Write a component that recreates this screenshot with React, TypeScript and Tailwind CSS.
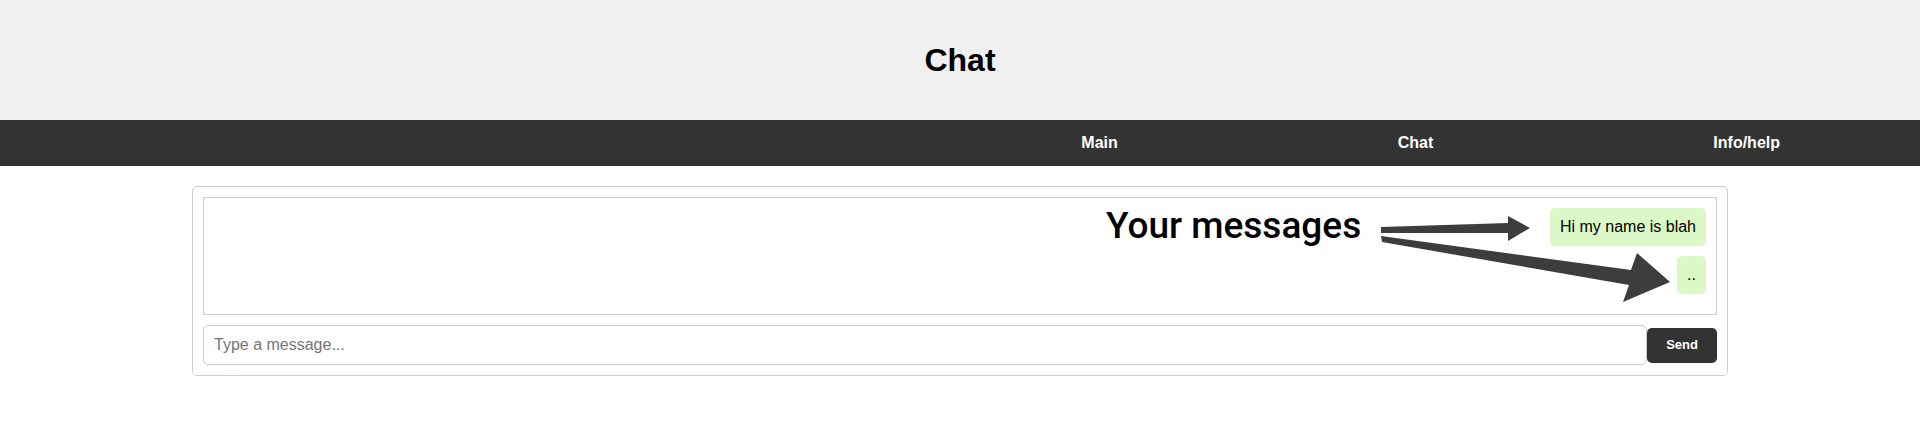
import { useState } from 'react';

const messages = ['Hi my name is blah', '..'];

export default function App() {
  const [text, setText] = useState('');

  return (
    <div className="relative min-h-[426px] bg-white font-['Liberation_Sans',Arial,sans-serif] text-black">
      {/* header */}
      <header className="h-[120px] bg-[#f0f0f0] flex items-center justify-center">
        <h1 className="text-[32px] font-bold leading-normal">Chat</h1>
      </header>

      {/* nav */}
      <nav className="h-[46px] bg-[#333333] flex items-center justify-end">
        {['Main', 'Chat', 'Info/help'].map((label) => (
          <a key={label} href="#" className="px-[140px] text-[16px] font-bold text-white leading-normal">
            {label}
          </a>
        ))}
      </nav>

      {/* chat card */}
      <main className="pt-[20px]">
        <div className="w-[80%] mx-auto border border-[#cccccc] rounded-[5px] p-[10px]">
          <div className="border border-[#cccccc] p-[10px] flex flex-col items-end">
            {messages.map((m, i) => (
              <div key={i} className="mb-[10px] bg-[#dcf8c6] rounded-[5px] p-[10px] text-[16px] leading-[18px]">
                {m}
              </div>
            ))}
          </div>
          <div className="mt-[10px] flex items-center">
            <input
              type="text"
              value={text}
              onChange={(e) => setText(e.target.value)}
              placeholder="Type a message..."
              className="flex-1 h-[40px] border border-[#cccccc] rounded-[5px] px-[10px] text-[16px] outline-none placeholder:text-[#757575]"
            />
            <button className="h-[35px] px-[19px] bg-[#333333] text-white text-[13px] font-bold rounded-[5px]">
              Send
            </button>
          </div>
        </div>
      </main>

      {/* annotation over the chat box */}
      <div className="absolute left-[1106px] top-[207px] font-['Roboto',sans-serif] text-[37px] font-medium leading-none text-black pointer-events-none">
        Your messages
      </div>
      <svg className="absolute left-0 top-0 pointer-events-none" width="1920" height="426" viewBox="0 0 1920 426">
        <polygon
          points="1381,227 1508,223 1508,216 1530,228 1508,241 1508,233 1381,233"
          fill="#3d3d3d"
        />
        <polygon
          points="1381,236 1631,270 1637,253 1670,282 1623,302 1629,285 1382,242"
          fill="#3d3d3d"
        />
      </svg>
    </div>
  );
}
